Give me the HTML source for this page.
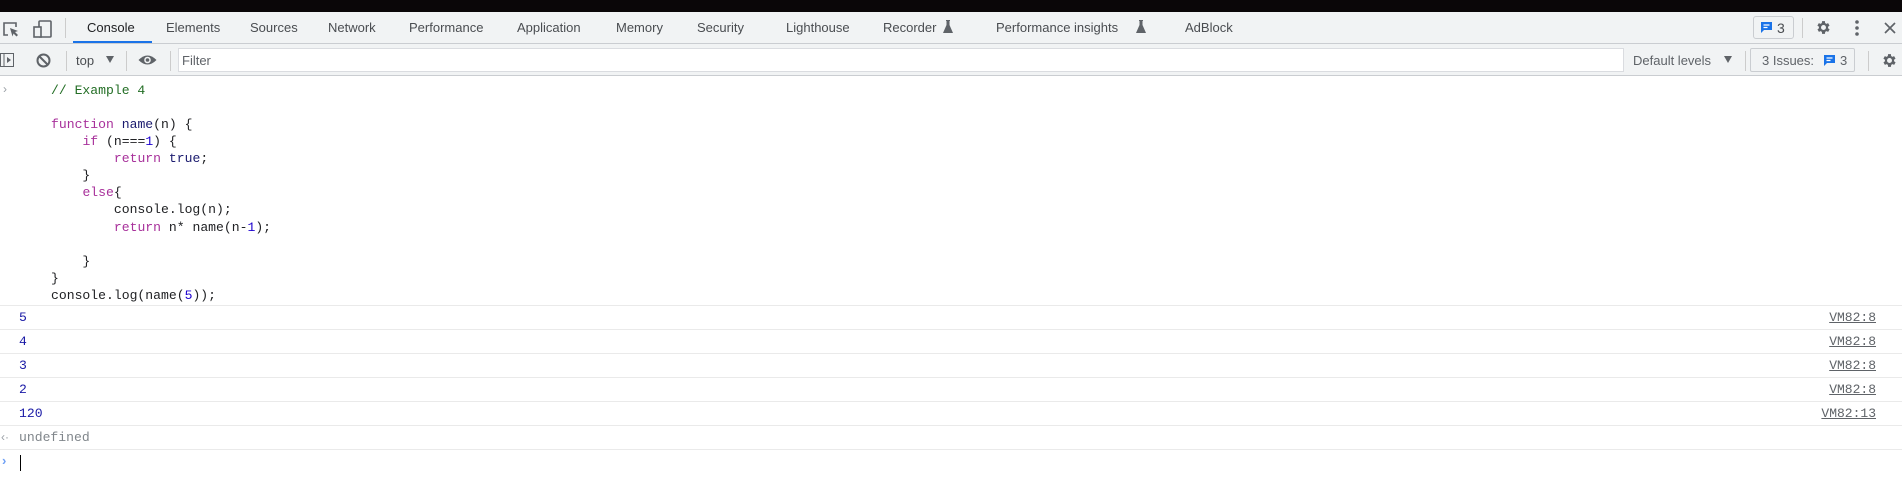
<!DOCTYPE html>
<html><head><meta charset="utf-8"><style>
*{margin:0;padding:0;box-sizing:border-box}
body{width:1902px;height:490px;overflow:hidden;background:#fff;font-family:"Liberation Sans",sans-serif;position:relative}
.a{position:absolute;white-space:pre}
.ui{font-size:13px;color:#4a4d51}
.m{font-family:"Liberation Mono",monospace;font-size:13.1px;color:#202124}
.k{color:#a8319b}.c{color:#236e25}.n{color:#1c00cf}.f{color:#1a1a6e}
.sep{position:absolute;width:1px;background:#ccc}
.row{position:absolute;left:0;width:1902px;height:1px;background:#eaeaea}
.vm{font-family:"Liberation Mono",monospace;font-size:13px;color:#5f6368;text-decoration:underline;position:absolute;right:26px}
</style></head><body>
<div class="a" style="left:0;top:0;width:1902px;height:12px;background:#0a0608"></div>
<div class="a" style="left:0;top:12px;width:1902px;height:32px;background:#f1f3f4;border-bottom:1px solid #cacdd1"></div>
<div class="a" style="left:0;top:44px;width:1902px;height:32px;background:#f1f3f4;border-bottom:1px solid #cacdd1"></div>
<svg class="a" style="left:2px;top:21px" width="18" height="17" viewBox="0 0 18 17"><path d="M6 14H2V2h12v4" fill="none" stroke="#5f6368" stroke-width="1.6"/><path d="M8 7l8 3-3 1 3 3-1.5 1.5-3-3-1 3z" fill="#5f6368"/></svg>
<svg class="a" style="left:33px;top:20px" width="20" height="18" viewBox="0 0 20 18"><rect x="6" y="1" width="12" height="16" rx="1" fill="none" stroke="#5f6368" stroke-width="1.6"/><rect x="1" y="7" width="7" height="10" fill="#f1f3f4" stroke="#5f6368" stroke-width="1.6"/></svg>
<div class="sep" style="left:65px;top:18px;height:20px"></div>
<div class="a ui" style="left:87px;top:20px;color:#202124">Console</div>
<div class="a" style="left:73px;top:41px;width:79px;height:2px;background:#1a73e8"></div>
<div class="a ui" style="left:166px;top:20px">Elements</div>
<div class="a ui" style="left:250px;top:20px">Sources</div>
<div class="a ui" style="left:328px;top:20px">Network</div>
<div class="a ui" style="left:409px;top:20px">Performance</div>
<div class="a ui" style="left:517px;top:20px">Application</div>
<div class="a ui" style="left:616px;top:20px">Memory</div>
<div class="a ui" style="left:697px;top:20px">Security</div>
<div class="a ui" style="left:786px;top:20px">Lighthouse</div>
<div class="a ui" style="left:883px;top:20px">Recorder</div>
<svg class="a" style="left:943px;top:20px" width="10" height="13" viewBox="0 0 10 13"><path d="M3 0h4v1H6.5v4L10 13H0L3.5 5V1H3z" fill="#5f6368"/></svg>
<div class="a ui" style="left:996px;top:20px">Performance insights</div>
<svg class="a" style="left:1136px;top:20px" width="10" height="13" viewBox="0 0 10 13"><path d="M3 0h4v1H6.5v4L10 13H0L3.5 5V1H3z" fill="#5f6368"/></svg>
<div class="a ui" style="left:1185px;top:20px">AdBlock</div>
<div class="a" style="left:1753px;top:16px;width:41px;height:23px;border:1px solid #cacdd1;border-radius:3px"></div>
<svg class="a" style="left:1760px;top:21px" width="13" height="13" viewBox="0 0 13 13"><path d="M1 1h11v8H4l-3 3z" fill="#1a73e8"/><path d="M3.5 4h6M3.5 6.5h4" stroke="#fff" stroke-width="1.2"/></svg>
<div class="a ui" style="left:1777px;top:20px;font-size:14px">3</div>
<div class="sep" style="left:1802px;top:18px;height:20px"></div>
<svg class="a" style="left:1815px;top:19px" width="17" height="17" viewBox="0 0 24 24"><path fill="#5f6368" d="M19.4 13a7.5 7.5 0 000-2l2.1-1.6-2-3.5-2.5 1a7 7 0 00-1.7-1L15 3h-4l-.4 2.9a7 7 0 00-1.7 1l-2.5-1-2 3.5L6.6 11a7.5 7.5 0 000 2l-2.1 1.6 2 3.5 2.5-1a7 7 0 001.7 1L11 21h4l.4-2.9a7 7 0 001.7-1l2.5 1 2-3.5zM13 15.5a3.5 3.5 0 110-7 3.5 3.5 0 010 7z" transform="translate(-1 0)"/></svg>
<svg class="a" style="left:1854px;top:19px" width="6" height="18"><circle cx="3" cy="3" r="1.8" fill="#5f6368"/><circle cx="3" cy="9" r="1.8" fill="#5f6368"/><circle cx="3" cy="15" r="1.8" fill="#5f6368"/></svg>
<svg class="a" style="left:1884px;top:22px" width="12" height="12"><path d="M1 1l10 10M11 1L1 11" stroke="#5f6368" stroke-width="1.7"/></svg>
<svg class="a" style="left:0;top:53px" width="14" height="14"><rect x="0.5" y="0.5" width="13" height="13" fill="none" stroke="#5f6368"/><path d="M4 1v12" stroke="#5f6368"/><path d="M7 4l4 3-4 3z" fill="#5f6368"/></svg>
<svg class="a" style="left:36px;top:53px" width="15" height="15"><circle cx="7.5" cy="7.5" r="6" fill="none" stroke="#5f6368" stroke-width="2"/><path d="M3.5 3.5l8 8" stroke="#5f6368" stroke-width="2"/></svg>
<div class="sep" style="left:66px;top:51px;height:20px"></div>
<div class="a ui" style="left:76px;top:53px">top</div>
<svg class="a" style="left:106px;top:56px" width="8" height="7"><path d="M0 0h8L4 7z" fill="#5f6368"/></svg>
<div class="sep" style="left:126px;top:51px;height:20px"></div>
<svg class="a" style="left:138px;top:54px" width="19" height="12" viewBox="0 0 19 12"><path d="M0.5 6Q9.5-3 18.5 6Q9.5 15 0.5 6z" fill="#5f6368"/><circle cx="9.5" cy="6" r="3.3" fill="#f1f3f4"/><circle cx="9.5" cy="6" r="1.8" fill="#5f6368"/></svg>
<div class="sep" style="left:170px;top:51px;height:20px"></div>
<div class="a" style="left:178px;top:48px;width:1446px;height:24px;background:#fff;border:1px solid #dadce0"></div>
<div class="a ui" style="left:182px;top:53px;color:#5f6368">Filter</div>
<div class="a ui" style="left:1633px;top:53px;color:#5f6368">Default levels</div>
<svg class="a" style="left:1724px;top:56px" width="8" height="7"><path d="M0 0h8L4 7z" fill="#5f6368"/></svg>
<div class="sep" style="left:1745px;top:51px;height:20px"></div>
<div class="a" style="left:1750px;top:48px;width:105px;height:24px;border:1px solid #cacdd1;border-radius:2px"></div>
<div class="a ui" style="left:1762px;top:53px;color:#5f6368">3 Issues:</div>
<svg class="a" style="left:1823px;top:54px" width="13" height="13" viewBox="0 0 13 13"><path d="M1 1h11v8H4l-3 3z" fill="#1a73e8"/><path d="M3.5 4h6M3.5 6.5h4" stroke="#fff" stroke-width="1.2"/></svg>
<div class="a ui" style="left:1840px;top:53px;color:#5f6368">3</div>
<div class="sep" style="left:1868px;top:51px;height:20px"></div>
<svg class="a" style="left:1881px;top:52px" width="17" height="17" viewBox="0 0 24 24"><path fill="#5f6368" d="M19.4 13a7.5 7.5 0 000-2l2.1-1.6-2-3.5-2.5 1a7 7 0 00-1.7-1L15 3h-4l-.4 2.9a7 7 0 00-1.7 1l-2.5-1-2 3.5L6.6 11a7.5 7.5 0 000 2l-2.1 1.6 2 3.5 2.5-1a7 7 0 001.7 1L11 21h4l.4-2.9a7 7 0 001.7-1l2.5 1 2-3.5zM13 15.5a3.5 3.5 0 110-7 3.5 3.5 0 010 7z" transform="translate(-1 0)"/></svg>
<div class="a" style="left:3px;top:82px;color:#9aa0a6;font-size:12px">›</div>
<div class="a m" style="left:51px;top:82px;line-height:17.07px"><span class="c">// Example 4</span>

<span class="k">function</span> <span class="f">name</span>(n) {
    <span class="k">if</span> (n===<span class="n">1</span>) {
        <span class="k">return</span> <span class="f">true</span>;
    }
    <span class="k">else</span>{
        console.log(n);
        <span class="k">return</span> n* name(n-<span class="n">1</span>);

    }
}
console.log(name(<span class="n">5</span>));</div>
<div class="row" style="top:305px"></div>
<div class="a m" style="left:19px;top:310px;color:#1a1aa6">5</div><div class="vm" style="top:310px">VM82:8</div>
<div class="row" style="top:329px"></div>
<div class="a m" style="left:19px;top:334px;color:#1a1aa6">4</div><div class="vm" style="top:334px">VM82:8</div>
<div class="row" style="top:353px"></div>
<div class="a m" style="left:19px;top:358px;color:#1a1aa6">3</div><div class="vm" style="top:358px">VM82:8</div>
<div class="row" style="top:377px"></div>
<div class="a m" style="left:19px;top:382px;color:#1a1aa6">2</div><div class="vm" style="top:382px">VM82:8</div>
<div class="row" style="top:401px"></div>
<div class="a m" style="left:19px;top:406px;color:#1a1aa6">120</div><div class="vm" style="top:406px">VM82:13</div>
<div class="row" style="top:425px"></div>
<div class="a" style="left:1px;top:430px;color:#9aa0a6;font-size:12px">‹·</div>
<div class="a m" style="left:19px;top:430px;color:#80868b">undefined</div>
<div class="row" style="top:449px"></div>
<div class="a" style="left:2px;top:453px;color:#6fa0f5;font-size:13px;font-weight:bold">›</div>
<div class="a" style="left:20px;top:455px;width:1px;height:16px;background:#000"></div>
</body></html>
